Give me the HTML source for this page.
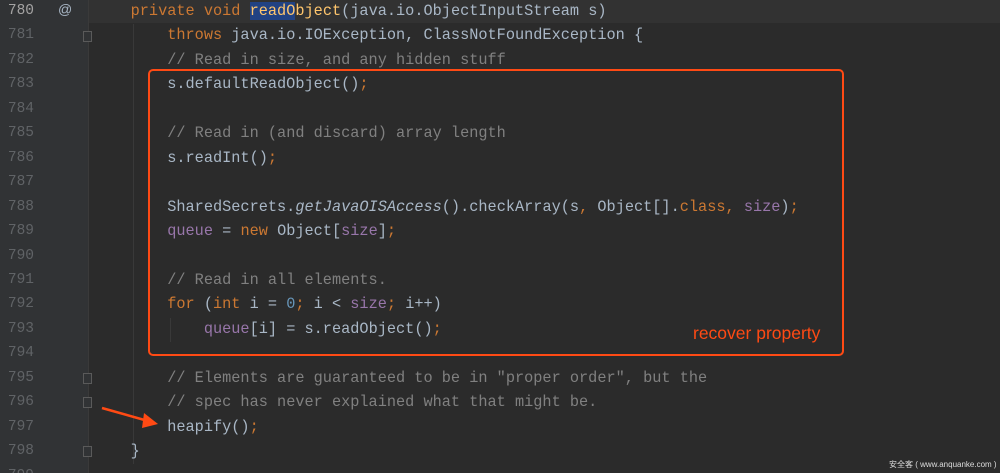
<!DOCTYPE html>
<html><head><meta charset="utf-8"><style>
html,body{margin:0;width:1000px;height:473px;overflow:hidden}
body{background:#2b2b2b;position:relative;font-family:"Liberation Mono",monospace}
.gut{position:absolute;left:0;top:0;width:88px;height:473px;background:#313335;border-right:1px solid #3a3a3a}
.cur{position:absolute;left:0;top:0;width:1000px;height:23px;background:#323232}
.ln{position:absolute;left:0;top:-1px;width:34px;text-align:right;font-size:14.5px;line-height:24.45px;color:#606366;white-space:pre}
.code{position:absolute;left:94px;top:-1px;font-size:15.25px;line-height:24.45px;color:#a9b7c6;white-space:pre}
.k{color:#cc7832}.c{color:#808080}.m{color:#ffc66d}.f{color:#9876aa}.n{color:#6897bb}.i{font-style:italic}
.hl{background:#214283}
.box{position:absolute;left:148px;top:69px;width:692px;height:283px;border:2.5px solid #ff4a14;border-radius:5px}
.lbl{position:absolute;left:693px;top:323px;font-family:"Liberation Sans",sans-serif;font-size:17.5px;color:#ff4a14;white-space:nowrap}
.wm{position:absolute;left:889px;top:459px;font-family:"Liberation Sans","Noto Sans CJK SC",sans-serif;font-size:8px;color:#ddd;white-space:nowrap}
.guide{position:absolute;left:133px;width:1px;background:#393939}
.fold{position:absolute;left:83px;width:9px;height:11px;border:1px solid #5a5a5a;box-sizing:border-box;background:#313335}
</style></head><body>
<div class="cur"></div>
<div class="gut"></div>
<div class="guide" style="top:24px;height:440px"></div>
<div class="guide" style="left:170px;top:318px;height:24px"></div>
<div class="ln"><span style="color:#a4a3a3">780</span>
781
782
783
784
785
786
787
788
789
790
791
792
793
794
795
796
797
798
799</div>
<div style="position:absolute;left:58px;top:1px;color:#a9b7c6;font-size:14px;font-family:'Liberation Sans',sans-serif">@</div>
<div class="fold" style="top:31px"></div>
<div class="fold" style="top:373px"></div>
<div class="fold" style="top:397px"></div>
<div class="fold" style="top:446px"></div>
<div class="code">    <span class="k">private void </span><span class="m"><span class="hl">readO</span>bject</span>(java.io.ObjectInputStream s)
        <span class="k">throws </span>java.io.IOException, ClassNotFoundException {
        <span class="c">// Read in size, and any hidden stuff</span>
        s.defaultReadObject()<span class="k">;</span>

        <span class="c">// Read in (and discard) array length</span>
        s.readInt()<span class="k">;</span>

        SharedSecrets.<span class="i">getJavaOISAccess</span>().checkArray(s<span class="k">, </span>Object[].<span class="k">class, </span><span class="f">size</span>)<span class="k">;</span>
        <span class="f">queue </span>= <span class="k">new </span>Object[<span class="f">size</span>]<span class="k">;</span>

        <span class="c">// Read in all elements.</span>
        <span class="k">for </span>(<span class="k">int </span>i = <span class="n">0</span><span class="k">; </span>i &lt; <span class="f">size</span><span class="k">; </span>i++)
            <span class="f">queue</span>[i] = s.readObject()<span class="k">;</span>

        <span class="c">// Elements are guaranteed to be in "proper order", but the</span>
        <span class="c">// spec has never explained what that might be.</span>
        heapify()<span class="k">;</span>
    }</div>
<div class="box"></div>
<div class="lbl">recover property</div>
<svg style="position:absolute;left:100px;top:405px" width="62" height="28"><line x1="2" y1="3" x2="48" y2="16" stroke="#ff4a14" stroke-width="2.5"/><polygon points="58,19 44,8 42,23" fill="#ff4a14"/></svg>
<div class="wm">安全客 ( www.anquanke.com )</div>
</body></html>
